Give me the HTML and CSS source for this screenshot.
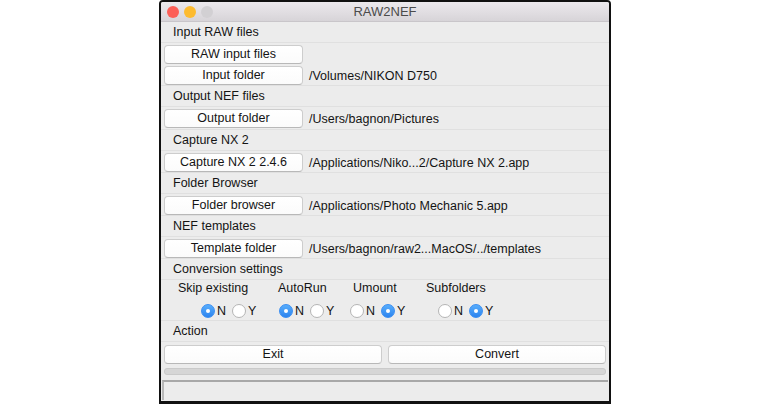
FILE: index.html
```html
<!DOCTYPE html>
<html>
<head>
<meta charset="utf-8">
<link rel="stylesheet" href="styles.css">
</head>
<body>
<div class="window">
  <div class="titlebar">
    <div class="lights"><span class="light red"></span><span class="light yellow"></span><span class="light gray"></span></div>
    <div class="title">RAW2NEF</div>
  </div>
  <div class="content">
    <div class="label">Input RAW files</div>
    <div class="frame">
      <div class="brow"><button class="btn">RAW input files</button></div>
      <div class="brow"><button class="btn">Input folder</button><span class="path">/Volumes/NIKON D750</span></div>
    </div>
    <div class="label">Output NEF files</div>
    <div class="frame tall">
      <div class="brow"><button class="btn">Output folder</button><span class="path">/Users/bagnon/Pictures</span></div>
    </div>
    <div class="label">Capture NX 2</div>
    <div class="frame">
      <div class="brow"><button class="btn">Capture NX 2 2.4.6</button><span class="path">/Applications/Niko...2/Capture NX 2.app</span></div>
    </div>
    <div class="label">Folder Browser</div>
    <div class="frame">
      <div class="brow"><button class="btn">Folder browser</button><span class="path">/Applications/Photo Mechanic 5.app</span></div>
    </div>
    <div class="label">NEF templates</div>
    <div class="frame">
      <div class="brow"><button class="btn">Template folder</button><span class="path">/Users/bagnon/raw2...MacOS/../templates</span></div>
    </div>
    <div class="label">Conversion settings</div>
    <div class="settings">
      <div class="slabel c1">Skip existing</div>
      <div class="slabel c2">AutoRun</div>
      <div class="slabel c3">Umount</div>
      <div class="slabel c4">Subfolders</div>
      <div class="radios r1"><span class="radio on"></span><span class="rt">N</span><span class="radio"></span><span class="rt">Y</span></div>
      <div class="radios r2"><span class="radio on"></span><span class="rt">N</span><span class="radio"></span><span class="rt">Y</span></div>
      <div class="radios r3"><span class="radio"></span><span class="rt">N</span><span class="radio on"></span><span class="rt">Y</span></div>
      <div class="radios r4"><span class="radio"></span><span class="rt">N</span><span class="radio on"></span><span class="rt">Y</span></div>
    </div>
    <div class="label">Action</div>
    <div class="actions">
      <button class="btn wide">Exit</button>
      <button class="btn wide">Convert</button>
    </div>
    <div class="progress"></div>
    <div class="status"></div>
  </div>
</div>
</body>
</html>
```

FILE: styles.css
```css
html, body {
  margin: 0;
  padding: 0;
  background: #ffffff;
}
body {
  font-family: "Liberation Sans", Arial, sans-serif;
  font-size: 12.5px;
  color: #141414;
}
.window {
  width: 448px;
  height: 399px;
  margin: 0 auto;
  border: 2px solid #111;
  border-bottom-width: 3px;
  border-radius: 4px 4px 0 0;
  background: #ececec;
  display: flex;
  flex-direction: column;
  overflow: hidden;
}
.titlebar {
  height: 19px;
  flex: none;
  display: flex;
  align-items: center;
  background: linear-gradient(#ece9ed, #d7d4d8);
  border-bottom: 1px solid #c9c6ca;
}
.lights {
  display: flex;
  gap: 5px;
  padding-left: 6px;
  width: 60px;
}
.light {
  width: 12px;
  height: 12px;
  border-radius: 50%;
}
.red { background: #fc5f57; }
.yellow { background: #fdbb2f; }
.gray { background: #d2d0d3; }
.title {
  flex: 1;
  text-align: center;
  font-size: 13px;
  color: #4b4b4b;
  padding-right: 66px;
}
.content {
  display: flex;
  flex-direction: column;
}
.label {
  height: 20px;
  line-height: 20px;
  padding-left: 12px;
}
.frame {
  border-top: 1px solid #e0e0e0;
  border-bottom: 1px solid #e0e0e0;
  padding: 2px 3px 0;
  display: flex;
  flex-direction: column;
  gap: 2px;
}
.frame.tall {
  padding-bottom: 1px;
}
.brow {
  display: flex;
  align-items: center;
  height: 19px;
}
.btn {
  font-family: "Liberation Sans", Arial, sans-serif;
  font-size: 12.5px;
  color: #141414;
  background: linear-gradient(#ffffff, #fbfbfb);
  border: 1px solid #cdcdcd;
  border-bottom-color: #b8b8b8;
  border-radius: 4px;
  height: 19px;
  width: 139px;
  padding: 0;
  margin: 0;
  line-height: 17px;
  text-align: center;
}
.path {
  margin-left: 6px;
}
.settings {
  border-top: 1px solid #e0e0e0;
  border-bottom: 1px solid #e0e0e0;
  display: grid;
  grid-template-columns: 110px 72px 73px 1fr;
  grid-template-rows: 16px 24px;
}
.slabel {
  line-height: 17px;
}
.c1 { padding-left: 17px; }
.c2 { padding-left: 7px; }
.c3 { padding-left: 10px; }
.c4 { padding-left: 10px; }
.radios {
  display: flex;
  align-items: center;
  padding-top: 5px;
}
.r1 { padding-left: 40px; }
.r2 { padding-left: 8px; }
.r3 { padding-left: 7px; }
.r4 { padding-left: 22px; }
.radio {
  width: 12px;
  height: 12px;
  border-radius: 50%;
  background: #fff;
  border: 1px solid #b5b5b5;
  flex: none;
  position: relative;
}
.radio.on {
  background: linear-gradient(#58aefc, #2c84ef);
  border-color: #3a8ef2;
}
.radio.on::after {
  content: "";
  position: absolute;
  left: 4px;
  top: 4px;
  width: 4px;
  height: 4px;
  border-radius: 50%;
  background: #fff;
}
.rt {
  margin-left: 2px;
  margin-right: 6px;
}
.actions {
  border-top: 1px solid #e0e0e0;
  padding: 3px 3px 0;
  display: flex;
  gap: 6px;
}
.btn.wide {
  width: 218px;
}
.progress {
  margin: 4px 3px 0;
  height: 5px;
  border-radius: 3px;
  background: #d6d6d6;
  border: 1px solid #cacaca;
}
.status {
  margin: 5px 1px 0 1px;
  height: 18px;
  border-top: 2px solid #a8a8a8;
  border-left: 2px solid #b8b8b8;
  background: #ececec;
}
```
